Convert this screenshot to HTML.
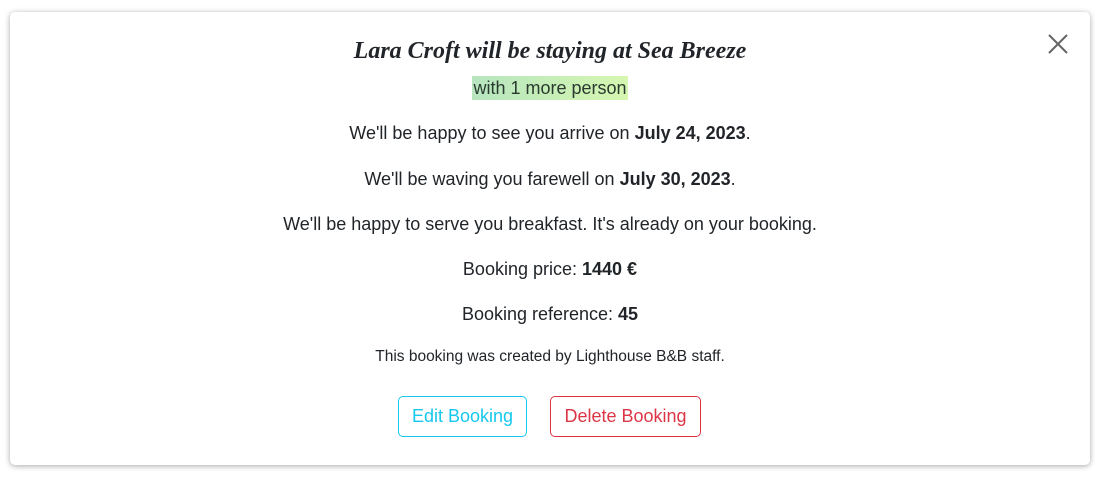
<!DOCTYPE html>
<html><head><style>
body{margin:0;background:#fff;width:1112px;height:492px;overflow:hidden;font-family:"Liberation Sans",sans-serif;color:#212529}
.card{position:absolute;left:10px;top:12px;width:1080px;height:453px;background:#fff;border-radius:5px;box-shadow:0 1px 6px rgba(0,0,0,.35)}
.c{position:absolute;left:0;width:1080px;text-align:center;white-space:nowrap}
h1{margin:0;font-family:"Liberation Serif",serif;font-style:italic;font-weight:bold;font-size:24px;top:26px}
.hl{top:64px}
.hl span{display:inline-block;background:linear-gradient(90deg,#b6e5bf,#d6f7b0);font-size:18px;line-height:24px;padding:0 1px;color:#2a3a30}
.t{font-size:18px;line-height:24px}
.btn{position:absolute;top:384px;height:41px;border:1px solid;border-radius:5px;box-sizing:border-box;font-size:18px;line-height:39px;text-align:center}
</style></head><body>
<div class="card">
<svg style="position:absolute;left:1038px;top:22px" width="20" height="20"><path d="M1 1L19 19M19 1L1 19" stroke="#666" stroke-width="2"/></svg>
<h1 class="c">Lara Croft will be staying at Sea Breeze</h1>
<div class="c hl"><span>with 1 more person</span></div>
<div class="c t" style="top:109px">We'll be happy to see you arrive on <b>July 24, 2023</b>.</div>
<div class="c t" style="top:155px">We'll be waving you farewell on <b>July 30, 2023</b>.</div>
<div class="c t" style="top:200px">We'll be happy to serve you breakfast. It's already on your booking.</div>
<div class="c t" style="top:245px">Booking price: <b>1440 €</b></div>
<div class="c t" style="top:290px">Booking reference: <b>45</b></div>
<div class="c" style="top:336px;font-size:15.5px">This booking was created by Lighthouse B&amp;B staff.</div>
<div class="btn" style="left:388px;width:129px;border-color:#17c8ee;color:#17c8ee">Edit Booking</div>
<div class="btn" style="left:540px;width:151px;border-color:#dc3545;color:#dc3545">Delete Booking</div>
</div>
</body></html>
